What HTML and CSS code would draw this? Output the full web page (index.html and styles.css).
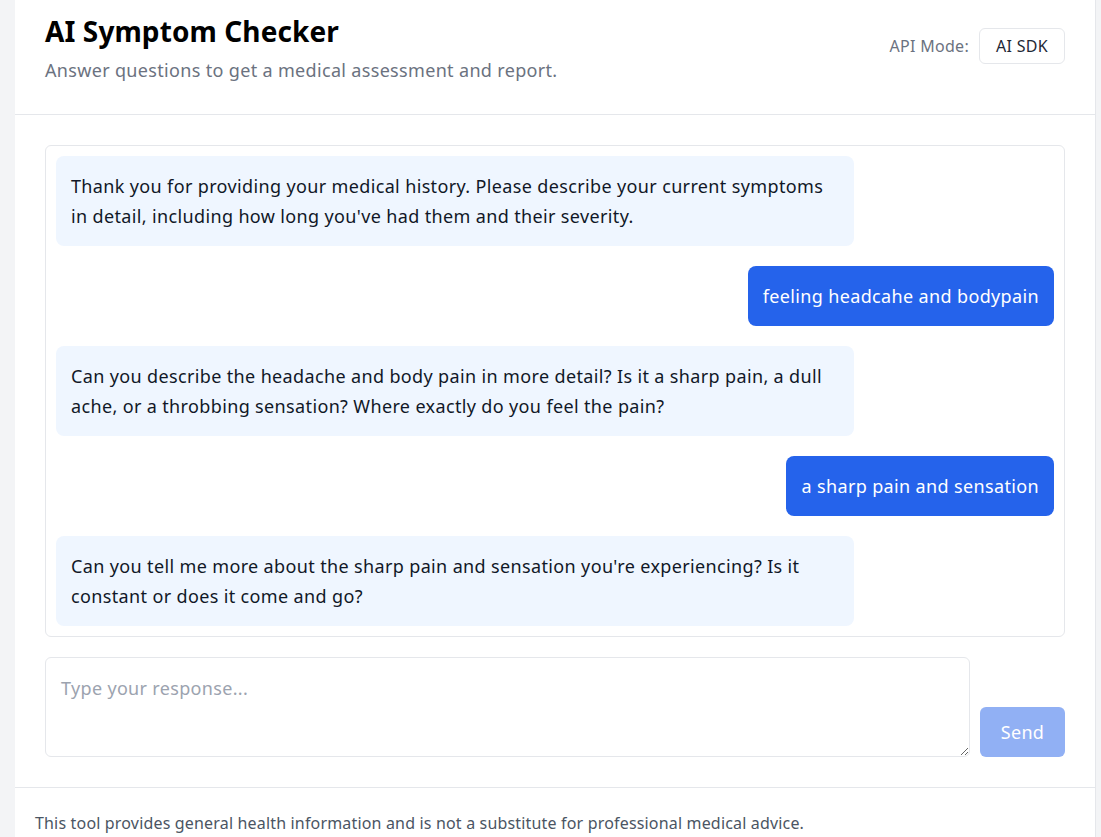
FILE: index.html
```html
<!DOCTYPE html>
<html>
<head>
<meta charset="utf-8">
<link rel="stylesheet" href="styles.css">
</head>
<body>
<div class="card">
  <header class="header">
    <div class="titles">
      <h1 class="title">AI Symptom Checker</h1>
      <p class="subtitle">Answer questions to get a medical assessment and report.</p>
    </div>
    <div class="mode">
      <span class="mode-label">API Mode:</span>
      <span class="mode-badge">AI SDK</span>
    </div>
  </header>
  <main class="body">
    <div class="chat">
      <div class="msg bot">Thank you for providing your medical history. Please describe your current symptoms in detail, including how long you've had them and their severity.</div>
      <div class="msg user">feeling headcahe and bodypain</div>
      <div class="msg bot">Can you describe the headache and body pain in more detail? Is it a sharp pain, a dull ache, or a throbbing sensation? Where exactly do you feel the pain?</div>
      <div class="msg user">a sharp pain and sensation</div>
      <div class="msg bot">Can you tell me more about the sharp pain and sensation you're experiencing? Is it constant or does it come and go?</div>
    </div>
    <div class="composer">
      <textarea class="input" placeholder="Type your response..."></textarea>
      <button class="send" disabled>Send</button>
    </div>
  </main>
  <footer class="footer">This tool provides general health information and is not a substitute for professional medical advice.</footer>
</div>
</body>
</html>
```

FILE: styles.css
```css
html, body {
  margin: 0;
  padding: 0;
  background: #f3f4f6;
  font-family: "Noto Sans", "Open Sans", "DejaVu Sans", sans-serif;
  color: #111827;
}
.card {
  margin-left: 15px;
  width: 1081px;
  min-height: 837px;
  background: #ffffff;
  border-right: 1px solid #e5e7eb;
  box-sizing: border-box;
}
.header {
  display: flex;
  justify-content: space-between;
  align-items: flex-start;
  padding: 13px 30px 0 30px;
  height: 115px;
  box-sizing: border-box;
  border-bottom: 1px solid #e5e7eb;
}
.title {
  margin: 0;
  font-size: 28px;
  line-height: 36px;
  font-weight: 700;
  color: #000;
  letter-spacing: 0.1px;
}
.subtitle {
  margin: 7px 0 0 0;
  font-size: 18px;
  line-height: 28px;
  color: #6b7280;
  letter-spacing: 0.33px;
}
.mode {
  display: flex;
  align-items: center;
  gap: 10px;
  margin-top: 15px;
}
.mode-label {
  font-size: 16px;
  color: #6b7280;
  letter-spacing: 0.3px;
}
.mode-badge {
  font-size: 16px;
  line-height: 22px;
  padding: 6px 16px;
  border: 1px solid #e5e7eb;
  border-radius: 6px;
  color: #1f2937;
  letter-spacing: 0.3px;
}
.body {
  padding: 30px 30px 30px 30px;
  border-bottom: 1px solid #e5e7eb;
}
.chat {
  border: 1px solid #e5e7eb;
  border-radius: 6px;
  padding: 10px;
  display: flex;
  flex-direction: column;
  gap: 20px;
}
.msg {
  max-width: 80%;
  box-sizing: border-box;
  font-size: 18px;
  line-height: 30px;
  padding: 15px 15px;
  border-radius: 8px;
  letter-spacing: 0.36px;
}
.msg.bot {
  align-self: flex-start;
  background: #eff6ff;
  color: #111827;
}
.msg.user {
  align-self: flex-end;
  background: #2563eb;
  color: #ffffff;
}
.composer {
  display: flex;
  align-items: flex-end;
  gap: 10px;
  margin-top: 20px;
}
.input {
  flex: 1;
  height: 100px;
  box-sizing: border-box;
  border: 1px solid #e5e7eb;
  border-radius: 6px;
  padding: 17px 15px;
  font-family: inherit;
  font-size: 18px;
  line-height: 26px;
  color: #111827;
  letter-spacing: 0.33px;
  resize: vertical;
  outline: none;
}
.input::placeholder {
  color: #9ca3af;
}
.send {
  width: 85px;
  height: 50px;
  border: none;
  border-radius: 6px;
  background: #2563eb;
  opacity: 0.5;
  color: #fff;
  font-family: inherit;
  font-size: 18px;
  letter-spacing: 0.3px;
}
.footer {
  padding: 23px 20px 22px;
  font-size: 16px;
  line-height: 24px;
  color: #4b5563;
  letter-spacing: 0.17px;
}
```
